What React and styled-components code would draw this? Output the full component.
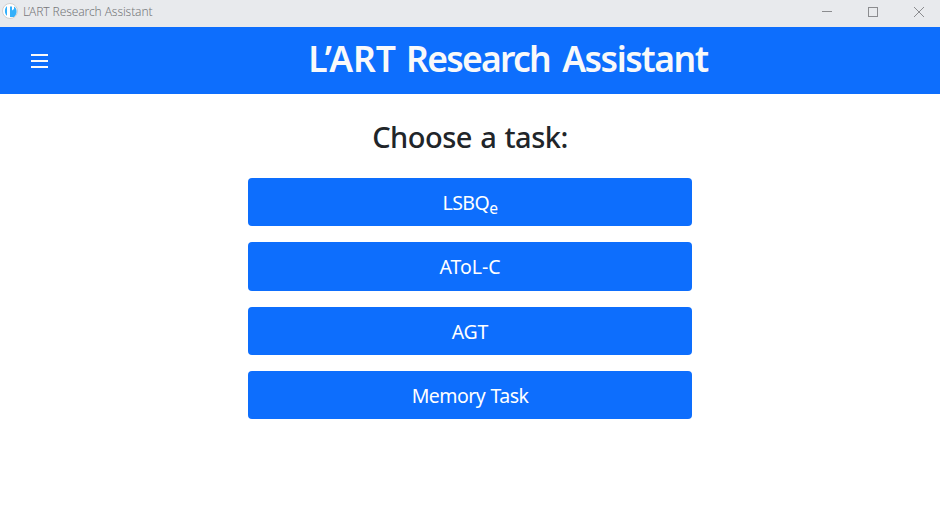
import React from "react";
import styled, { createGlobalStyle } from "styled-components";

const GlobalStyle = createGlobalStyle`
  * { box-sizing: border-box; }
  html, body { margin: 0; padding: 0; background: #fff; overflow: hidden; }
  body { font-family: "Noto Sans", "Open Sans", sans-serif; color: #212529; }
`;

const Window = styled.div`
  display: flex;
  flex-direction: column;
  height: 508px;
  background: #fff;
`;

const TitleBar = styled.div`
  display: flex;
  align-items: center;
  flex: none;
  height: 27px;
  padding: 0 0 4px 2px;
  background: #e8eaed;
  color: #8b8c8f;
`;

const WindowTitle = styled.span`
  flex: 1;
  margin-left: 4px;
  color: #77787b;
  font-size: 12px;
  font-weight: 300;
  line-height: 16px;
  letter-spacing: -0.1px;
  white-space: nowrap;
`;

const WindowControl = styled.button`
  display: flex;
  align-items: center;
  justify-content: center;
  width: 46px;
  height: 23px;
  padding: 0;
  border: 0;
  background: none;
  color: inherit;
`;

const Controls = styled.div`
  display: flex;
  margin-right: -2px;
`;

const Header = styled.header`
  display: flex;
  flex: none;
  height: 67px;
  background: #0d6efd;
  color: #f8f9fa;
`;

const MenuButton = styled.button`
  display: flex;
  align-items: center;
  justify-content: center;
  width: 78px;
  height: 67px;
  padding: 1px 0 0;
  border: 0;
  background: none;
  color: inherit;
`;

const AppTitle = styled.h1`
  flex: 1;
  margin: 0;
  padding-right: 2px;
  font-size: 35.5px;
  font-weight: 600;
  line-height: 63px;
  text-align: center;
  white-space: nowrap;
`;

const Word = styled.span`
  letter-spacing: ${(p) => p.$tracking}px;
  margin-right: ${(p) => p.$gap || 0}px;
`;

const Main = styled.main`
  display: flex;
  flex-direction: column;
  align-items: center;
`;

const Heading = styled.h2`
  margin: 25px 0 23px;
  font-size: 29px;
  font-weight: 500;
  line-height: 36px;
  letter-spacing: -0.5px;
  word-spacing: 1.2px;
`;

const TaskList = styled.div`
  display: flex;
  flex-direction: column;
  gap: 16px;
  width: 444px;
`;

const TaskButton = styled.button`
  height: 48.33px;
  padding: 2px 0 0;
  border: 0;
  border-radius: 4px;
  background: #0d6efd;
  color: #fff;
  font-family: inherit;
  font-size: 19.5px;
  line-height: 30px;
  letter-spacing: ${(p) => p.$tracking}px;
  word-spacing: 1px;
`;

const Sub = styled.sub`
  position: relative;
  bottom: -0.25em;
  font-size: 0.8em;
  line-height: 0;
  vertical-align: baseline;
`;

const tasks = [
  { id: "lsbq", label: <>LSBQ<Sub>e</Sub></>, tracking: -0.5 },
  { id: "atol", label: "AToL-C", tracking: 0 },
  { id: "agt", label: "AGT", tracking: -0.2 },
  { id: "memory", label: "Memory Task", tracking: -0.55 },
];

function AppLogo() {
  return (
    <svg width="17" height="17" viewBox="0 0 17 17">
      <circle cx="8" cy="8" r="7.5" fill="#fff" stroke="#d2d0cf" />
      <path d="M5 3.2C2.2 5 2.2 11 5 12.8Z" fill="#35b0fa" />
      <path d="M8 3.5H10V7.5L12 6V3.5C16 6 15 12 12 14H8Z" fill="#35b0fa" />
      <path d="M8 11H12V14H8Z" fill="#35b0fa" />
    </svg>
  );
}

export default function App() {
  return (
    <>
      <GlobalStyle />
      <Window>
        <TitleBar>
          <AppLogo />
          <WindowTitle>L’ART Research Assistant</WindowTitle>
          <Controls>
            <WindowControl aria-label="Minimize">
              <svg width="10" height="11"><path d="M0 5.5H10" stroke="currentColor" /></svg>
            </WindowControl>
            <WindowControl aria-label="Maximize">
              <svg width="10" height="10"><rect x=".5" y=".5" width="9" height="9" fill="none" stroke="currentColor" /></svg>
            </WindowControl>
            <WindowControl aria-label="Close">
              <svg width="10" height="10"><path d="M0 0L10 10M10 0L0 10" stroke="currentColor" /></svg>
            </WindowControl>
          </Controls>
        </TitleBar>
        <Header>
          <MenuButton aria-label="Menu">
            <svg width="18" height="14"><path d="M1 1H18M1 7H18M1 13H18" stroke="currentColor" strokeWidth="2" /></svg>
          </MenuButton>
          <AppTitle>
            <Word $tracking={-0.1} $gap={1}>L’ART</Word>{" "}
            <Word $tracking={-1.75} $gap={3}>Research</Word>{" "}
            <Word $tracking={-1.45}>Assistant</Word>
          </AppTitle>
        </Header>
        <Main>
          <Heading>Choose a task:</Heading>
          <TaskList>
            {tasks.map((t) => (
              <TaskButton key={t.id} $tracking={t.tracking}>{t.label}</TaskButton>
            ))}
          </TaskList>
        </Main>
      </Window>
    </>
  );
}
